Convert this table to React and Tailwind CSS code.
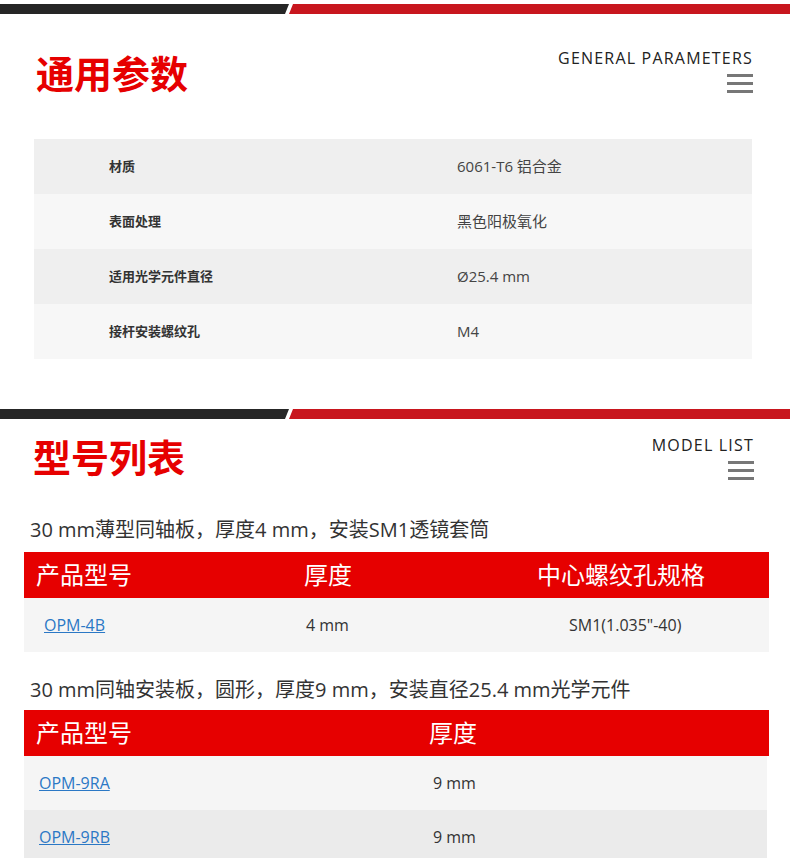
const font = { fontFamily: '"Open Sans", "Noto Sans CJK SC", sans-serif' };

const params = [
  { label: "材质", value: "6061-T6 铝合金" },
  { label: "表面处理", value: "黑色阳极氧化" },
  { label: "适用光学元件直径", value: "Ø25.4 mm" },
  { label: "接杆安装螺纹孔", value: "M4" },
];

function TopBar({ className = "" }) {
  return (
    <div className={`flex h-[10px] w-full ${className}`}>
      <div className="h-full w-[289px] bg-[#262626] [clip-path:polygon(0_0,100%_0,calc(100%-4px)_100%,0_100%)]" />
      <div className="h-full flex-1 bg-[#c8161e] [clip-path:polygon(4px_0,100%_0,100%_100%,0_100%)]" />
    </div>
  );
}

function Burger() {
  return (
    <div className="flex w-[26px] flex-col gap-[5px]">
      <span className="block h-[3px] bg-[#777]" />
      <span className="block h-[3px] bg-[#777]" />
      <span className="block h-[3px] bg-[#777]" />
    </div>
  );
}

function SectionHead({ title, en, titleClass, enClass }) {
  return (
    <div className="flex items-start justify-between">
      <h2 className={`text-[38px] font-bold leading-none text-[#e60000] ${titleClass}`}>{title}</h2>
      <div className={`flex flex-col items-end ${enClass}`}>
        <div className="text-[16px] leading-none tracking-[1.2px] text-[#222]">{en}</div>
        <div className="mt-[8px]">
          <Burger />
        </div>
      </div>
    </div>
  );
}

export default function App() {
  return (
    <div className="min-h-[858px] w-[790px] overflow-hidden bg-white text-[#333]" style={font}>
      <TopBar className="mt-[4px]" />

      <div className="pl-[36px] pr-[37px]">
        <SectionHead
          title="通用参数"
          en="GENERAL PARAMETERS"
          titleClass="mt-[40px]"
          enClass="mt-[36px]"
        />
      </div>

      <div className="mx-[34px] mt-[46px] w-[718px]">
        {params.map((row, i) => (
          <div
            key={row.label}
            className={`grid h-[55px] grid-cols-[423px_1fr] items-center ${
              i % 2 === 0 ? "bg-[#efefef]" : "bg-[#f7f7f7]"
            }`}
          >
            <div className="pl-[75px] text-[13px] font-bold text-[#333]">{row.label}</div>
            <div className="text-[15px] text-[#444]">{row.value}</div>
          </div>
        ))}
      </div>

      <TopBar className="mt-[50px]" />

      <div className="pl-[33px] pr-[36px]">
        <SectionHead title="型号列表" en="MODEL LIST" titleClass="mt-[19px]" enClass="mt-[18px]" />
      </div>

      <p className="mt-[40px] pl-[30px] text-[20px] leading-none text-[#333]">
        30 mm薄型同轴板，厚度4 mm，安装SM1透镜套筒
      </p>

      <div className="mx-[24px] mt-[12px] w-[745px]">
        <div className="grid h-[46px] grid-cols-[280px_233px_1fr] items-center bg-[#e60000] text-[24px] text-white">
          <div className="pl-[12px]">产品型号</div>
          <div>厚度</div>
          <div>中心螺纹孔规格</div>
        </div>
        <div className="grid h-[54px] grid-cols-[280px_233px_1fr] items-center bg-[#f5f5f5] text-[16px]">
          <div className="pl-[20px]">
            <a href="#" className="text-[#2b78c5] underline">OPM-4B</a>
          </div>
          <div className="pl-[2px] text-[#333]">4 mm</div>
          <div className="pl-[32px] text-[#333]">SM1(1.035"-40)</div>
        </div>
      </div>

      <p className="mt-[28px] pl-[30px] text-[20px] leading-none text-[#333]">
        30 mm同轴安装板，圆形，厚度9 mm，安装直径25.4 mm光学元件
      </p>

      <div className="mx-[24px] mt-[10px] w-[745px]">
        <div className="grid h-[46px] grid-cols-[405px_1fr] items-center bg-[#e60000] text-[24px] text-white">
          <div className="pl-[12px]">产品型号</div>
          <div>厚度</div>
        </div>
        {["OPM-9RA", "OPM-9RB"].map((m, i) => (
          <div
            key={m}
            className={`mr-[2px] grid h-[54px] grid-cols-[405px_1fr] items-center text-[16px] ${
              i % 2 === 0 ? "bg-[#f5f5f5]" : "bg-[#ebebeb]"
            }`}
          >
            <div className="pl-[15px]">
              <a href="#" className="text-[#2b78c5] underline">{m}</a>
            </div>
            <div className="pl-[4px] text-[#333]">9 mm</div>
          </div>
        ))}
      </div>
    </div>
  );
}
